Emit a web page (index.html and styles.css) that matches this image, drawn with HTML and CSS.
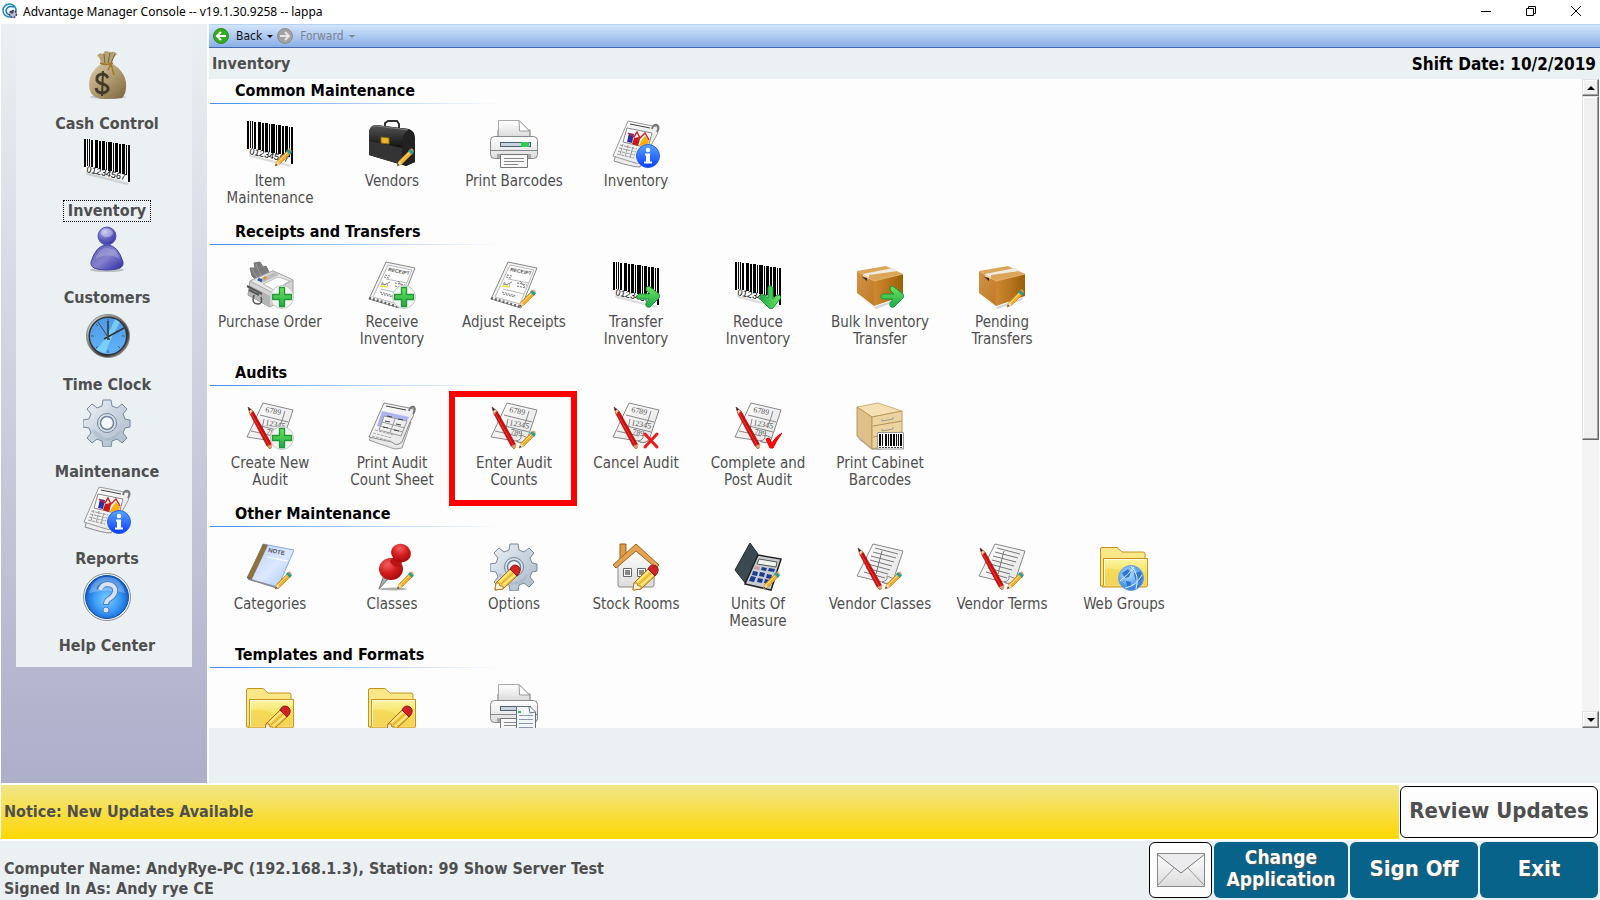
FILE: index.html
```html
<!DOCTYPE html>
<html lang="en">
<head>
  <meta charset="UTF-8" />
  <title>Advantage Manager Console</title>
  <link rel="stylesheet" href="styles.css">
</head>
<body>
  <!-- shared icon shapes, all on a 48x48 grid -->
  <svg class="defs" width="0" height="0" aria-hidden="true">
    <defs>
      <linearGradient id="gBag" x1="0" y1="0" x2="1" y2="1"><stop offset="0" stop-color="#d9ccaa"/><stop offset=".5" stop-color="#b09a70"/><stop offset="1" stop-color="#7a643c"/></linearGradient>
      <radialGradient id="gUser" cx=".35" cy=".25" r=".9"><stop offset="0" stop-color="#b5b4ec"/><stop offset=".5" stop-color="#6260be"/><stop offset="1" stop-color="#2c2aa0"/></radialGradient>
      <linearGradient id="gBody" x1="0" y1="0" x2="1" y2="1"><stop offset="0" stop-color="#5a58b4"/><stop offset=".5" stop-color="#8482cc"/><stop offset="1" stop-color="#2a27a4"/></linearGradient>
      <linearGradient id="gSteel" x1="0" y1="0" x2="1" y2="1"><stop offset="0" stop-color="#fff"/><stop offset=".4" stop-color="#777"/><stop offset=".7" stop-color="#333"/><stop offset="1" stop-color="#bbb"/></linearGradient>
      <linearGradient id="gFace" x1="0" y1="0" x2="0" y2="1"><stop offset="0" stop-color="#4d9ae6"/><stop offset="1" stop-color="#62b2fa"/></linearGradient>
      <linearGradient id="gGear" x1="0" y1="0" x2="1" y2="1"><stop offset="0" stop-color="#f4f6f9"/><stop offset=".45" stop-color="#ccd6e1"/><stop offset="1" stop-color="#a9b8c8"/></linearGradient>
      <linearGradient id="gInfo" x1="0" y1="0" x2="0" y2="1"><stop offset="0" stop-color="#5aa5ff"/><stop offset="1" stop-color="#0a3cff"/></linearGradient>
      <radialGradient id="gHelp" cx=".5" cy=".55" r=".55"><stop offset="0" stop-color="#7fd0ff"/><stop offset=".55" stop-color="#3a9af6"/><stop offset="1" stop-color="#0b56c8"/></radialGradient>
      <linearGradient id="gGreen" x1="0" y1="0" x2="0" y2="1"><stop offset="0" stop-color="#6fe35a"/><stop offset="1" stop-color="#1fa94c"/></linearGradient>
      <linearGradient id="gBoxL" x1="0" y1="0" x2="1" y2="1"><stop offset="0" stop-color="#d29245"/><stop offset="1" stop-color="#c07a28"/></linearGradient>
      <linearGradient id="gBoxR" x1="0" y1="0" x2="1" y2="0"><stop offset="0" stop-color="#cf8832"/><stop offset="1" stop-color="#9a6008"/></linearGradient>
      <linearGradient id="gFolder" x1="0" y1="0" x2="0" y2="1"><stop offset="0" stop-color="#fdf6a8"/><stop offset=".45" stop-color="#f6e468"/><stop offset="1" stop-color="#f8d870"/></linearGradient>
      <linearGradient id="gPaper" x1="0" y1="0" x2="1" y2="1"><stop offset="0" stop-color="#fff"/><stop offset="1" stop-color="#e2e2e2"/></linearGradient>
      <linearGradient id="gNote" x1="0" y1="0" x2="1" y2="1"><stop offset="0" stop-color="#b4cdfb"/><stop offset=".55" stop-color="#dce9ff"/><stop offset="1" stop-color="#9fc0f8"/></linearGradient>
      <radialGradient id="gPin" cx=".35" cy=".3" r=".8"><stop offset="0" stop-color="#f06060"/><stop offset=".5" stop-color="#d41c1c"/><stop offset="1" stop-color="#9c0808"/></radialGradient>
      <linearGradient id="gWhite" x1="0" y1="0" x2="0" y2="1"><stop offset="0" stop-color="#fff"/><stop offset="1" stop-color="#dcdcdc"/></linearGradient>
      <linearGradient id="gCase" x1="0" y1="0" x2="0" y2="1"><stop offset="0" stop-color="#555"/><stop offset="1" stop-color="#111"/></linearGradient>
      <radialGradient id="gGlobe" cx=".4" cy=".35" r=".7"><stop offset="0" stop-color="#c0e2ff"/><stop offset=".6" stop-color="#5aa3ee"/><stop offset="1" stop-color="#2a6fd0"/></radialGradient>

      <symbol id="bag" viewBox="0 0 48 48">
        <ellipse cx="25" cy="46" rx="18" ry="2" fill="#000" opacity=".15"/>
        <path d="M18 13Q6 21 6 33Q6 38 8 42Q12 48 22 48Q32 48 39 47Q44 42 43 31Q41 20 30 13Z" fill="url(#gBag)"/>
        <path d="M18 12Q17 6 14 5Q16 1 20 3L22 0L28 1Q32 0 34 3Q29 7 29 13Q24 15 18 12Z" fill="#b7a276"/>
        <path d="M21 3L22 12M27 2L25 12M32 3L28 12" stroke="#74603a" fill="none"/>
        <path d="M17 12Q23 15 30 12M28 13L31 24M28 13L25 19" stroke="#a5762a" stroke-width="1.5" fill="none"/>
        <path d="M25 27Q23 23 19 23Q13 24 14 29Q15 32 20 33Q26 35 25 39Q23 42 19 42Q14 42 13 37" stroke="#453b2b" stroke-width="3" fill="none"/>
        <path d="M20 20L19 45" stroke="#453b2b" stroke-width="2"/>
      </symbol>
      <symbol id="barcode" viewBox="0 0 48 48">
        <path d="M2 34L46 45L44 47L4 37Z" fill="#000" opacity=".12"/>
        <path d="M1 1L47 8V44L1 32Z" fill="#fff"/>
        <path fill="#000" d="M1 1h2v28h-2zM4 1h1v27h-1zM6 1h1v27h-1zM8 2h2v27h-2zM12 2h3v28h-3zM16 3h2v28h-2zM19 3h3v29h-3zM23 4h1v28h-1zM25 4h4v29h-4zM30 5h1v29h-1zM32 5h3v29h-3zM36 6h2v29h-2zM39 6h3v30h-3zM43 7h1v30h-1zM45 7h2v37h-2z"/>
        <text x="3" y="34" transform="rotate(12 3 34)" class="ico-code">01234567</text>
      </symbol>
      <symbol id="user" viewBox="0 0 48 48">
        <ellipse cx="24" cy="45" rx="17" ry="2" fill="#000" opacity=".2"/>
        <path d="M24 20Q35 20 40 37Q42 45 24 45Q6 45 8 37Q13 20 24 20Z" fill="url(#gBody)" stroke="#4644a4"/>
        <circle cx="24" cy="11" r="9" fill="url(#gUser)" stroke="#5856b0"/>
        <ellipse cx="24" cy="8" rx="6" ry="4" fill="#fff" opacity=".35"/>
        <path d="M12 34Q17 22 24 23Q33 23 37 34Q26 27 12 34Z" fill="#fff" opacity=".2"/>
      </symbol>
      <symbol id="clock" viewBox="0 0 48 48">
        <circle cx="25" cy="24" r="21.5" fill="url(#gSteel)" stroke="#888"/>
        <circle cx="25" cy="24" r="19.5" fill="#333"/>
        <circle cx="25" cy="24" r="18" fill="url(#gFace)"/>
        <path d="M13 38Q24 27 32 7L37 10Q27 28 22 41Z" fill="#8fe8fa" opacity=".6"/>
        <path d="M25 7v3M25 38v3M8 24h3M39 24h3M13 12l2 2M35 34l2 2M13 36l2-2" stroke="#35617d"/>
        <path d="M25 9V28M21 27L41 16" stroke="#333" stroke-width="1.5" fill="none"/>
        <path d="M15 10L27 28" stroke="#444"/>
      </symbol>
      <symbol id="gear" viewBox="0 0 48 48">
        <path d="M20 1h8l1 6 5 2 5-4 5 5-4 5 2 5 5 1v7l-5 1-2 5 4 5-5 5-5-4-5 2-1 6h-8l-1-6-5-2-5 4-5-5 4-5-2-5-6-1v-7l6-1 2-5-4-5 5-5 5 4 5-2z" fill="url(#gGear)" stroke="#74879b"/>
        <path d="M8 30Q16 32 20 38Q27 42 39 30Q34 42 24 42Q12 41 8 30Z" fill="#8ea2b8" opacity=".35"/>
        <circle cx="24" cy="24" r="9.5" fill="#d9e1ea" stroke="#71859a"/>
        <circle cx="24" cy="24" r="6.5" fill="#f4f7fa" stroke="#71859a" stroke-width="1.5"/>
      </symbol>
      <symbol id="report" viewBox="0 0 48 48">
        <path d="M4 34L2 41Q20 47 28 47L34 38Z" fill="#eee" stroke="#888"/>
        <path d="M16 1L46 7Q47 14 42 20L30 42Q26 45 20 42L1 36Z" fill="url(#gPaper)" stroke="#999"/>
        <path d="M40 9Q41 4 45 5Q48 7 45 12" fill="none" stroke="#777" stroke-width="2"/>
        <path d="M18 4L38 8" stroke="#444"/>
        <path d="M15 8L40 13L36 28L11 22Z" fill="#fff" stroke="#888"/>
        <path d="M17 13L22 14L20 23L15 22Z" fill="#2a2ea8"/><path d="M22 18L27 17L28 19L26 26L20 24Z" fill="#c81818"/><path d="M29 21L33 16L37 21L35 28L27 26Z" fill="#ffae10"/>
        <path d="M16 13L22 17L25 12L28 18L33 13L37 20" fill="none" stroke="#d82020" stroke-width="1.5"/>
        <path d="M8 25L25 29M7 28L24 32M6 31L23 35M5 34L22 38M11 24L8 35M16 25L13 37M21 27L18 38" stroke="#999" stroke-dasharray="3 1"/>
      </symbol>
      <symbol id="info" viewBox="0 0 48 48">
        <circle cx="36" cy="36" r="11.5" fill="url(#gInfo)" stroke="#2a63e8"/>
        <circle cx="36" cy="30" r="2.2" fill="#fff"/><path d="M33 33.5h5v8h2v2h-8v-2h2v-6h-1z" fill="#fff"/>
      </symbol>
      <symbol id="help" viewBox="0 0 48 48">
        <circle cx="24" cy="24" r="23.5" fill="#f4f6f8" stroke="#8a8f96"/>
        <circle cx="24" cy="24" r="21.5" fill="url(#gHelp)" stroke="#124f9c"/>
        <path d="M6 20Q10 4 24 4Q38 4 42 20Q24 15 6 20Z" fill="#fff" opacity=".28"/>
        <path d="M16 17Q18 11 25 11Q33 12 32 19Q31 23 26 26Q23 28 23 32" fill="none" stroke="#4c7fbd" stroke-width="6"/>
        <path d="M17 17Q19 11 25 11Q33 12 32 19Q31 23 26 26Q23 28 23 31" fill="none" stroke="#d8e2f2" stroke-width="4"/>
        <circle cx="23" cy="37" r="3" fill="#d8e2f2" stroke="#4c7fbd"/>
      </symbol>
      <symbol id="pencil" viewBox="0 0 48 48">
        <path d="M29 46L31 41L41 31L44 34L34 44Z" fill="#f4b02c" stroke="#c27c14" stroke-width=".7"/>
        <path d="M32 42L42 32" stroke="#ffe08a"/>
        <path d="M29 46L31 41L34 44Z" fill="#f3d9ac"/><path d="M29 46L30 43.5L31.5 45Z" fill="#444"/>
        <path d="M40 31L42 29L46 32L44 35Z" fill="#2c9c92"/><path d="M42 29Q45 27 46 32Z" fill="#e8a060"/>
      </symbol>
      <symbol id="bigpencil" viewBox="0 0 48 48">
        <path d="M21 47L22 40L37 25L44 32L29 46Z" fill="#f8cc40" stroke="#b06a10"/>
        <path d="M25 39L38 27M28 43L42 31" stroke="#fff0a0" stroke-width="1.5"/><path d="M27 41L40 29" stroke="#e0a020"/>
        <path d="M21 47L22 40L25 40L26 43L29 43L29 46Z" fill="#fff4dc" stroke="#b06a10" stroke-width=".8"/>
        <path d="M36 26Q39 20 44 23Q49 27 43 33Z" fill="#d02424" stroke="#981414"/>
      </symbol>
      <symbol id="plus" viewBox="0 0 48 48">
        <circle cx="36" cy="36" r="11.5" fill="#f3f3f3" stroke="#c8c8c8"/>
        <path d="M33.5 26.5h5v7h7v5h-7v7h-5v-7h-7v-5h7z" fill="url(#gGreen)" stroke="#209a34" stroke-width="1.3" stroke-linejoin="round"/>
      </symbol>
      <symbol id="arrow" viewBox="0 0 48 48">
        <path d="M25 34.5Q24 38 27 38H37L34 42Q33 47 38 46L47 37Q49 35 47 33L38 26Q34 24 34 29L38 33H27Z" fill="url(#gGreen)" stroke="#179a3e"/>
      </symbol>
      <symbol id="case" viewBox="0 0 48 48">
        <path d="M17 8V3L20 1H29L31 4V11" fill="none" stroke="#333" stroke-width="2"/>
        <path d="M16 8L31 10" stroke="#b98a1c" stroke-width="3"/>
        <path d="M1 12Q2 5 8 5L41 9Q47 11 47 19V42L38 46L1 35Z" fill="#181818"/>
        <path d="M1 12Q2 5 8 5L41 9Q34 13 34 28L1 21Z" fill="url(#gCase)"/>
        <path d="M1 21L34 28V45L1 35Z" fill="#343434"/><path d="M34 28Q34 12 41 10Q47 12 47 21V42L38 46L34 44Z" fill="#222"/>
        <path d="M13 17L21 18V24L13 23Z" fill="#e8b62c" stroke="#906c10"/>
        <path d="M2 8Q4 5 9 6L40 10" stroke="#999" fill="none" opacity=".6"/>
      </symbol>
      <symbol id="printer" viewBox="0 0 48 48">
        <path d="M8 17V10H40V17" fill="#dbe4ec" stroke="#62788c"/>
        <path d="M8.5 16.5V.5H29L39.5 11V16.5Z" fill="url(#gWhite)" stroke="#aaa"/>
        <path d="M29 .5L29.500 11H39.5Z" fill="#fff" stroke="#999"/>
        <rect x=".5" y="16.5" width="47" height="22" rx="4" fill="url(#gWhite)" stroke="#888"/>
        <path d="M1 30.5H47" stroke="#888"/>
        <rect x="10.5" y="22.5" width="30" height="4" fill="#c8d2da" stroke="#4f6070"/>
        <path d="M7 34H41V38H7Z" fill="#aaa"/>
        <path d="M10.5 34.5H37.5V47.5H10.5Z" fill="#f8f8f8" stroke="#777"/>
        <path d="M14 38.5H34M14 41.5H34M14 44.5H28" stroke="#888"/>
      </symbol>
      <symbol id="light" viewBox="0 0 48 48"><rect x="31" y="22" width="8" height="5" rx="1" fill="#2ecc50"/></symbol>
      <symbol id="sheet" viewBox="0 0 48 48">
        <path d="M26.5 22.5H40L45.5 28V48H26.5Z" fill="#f2f7fb" stroke="#5f7386"/><path d="M39 23L40 29L45 28" fill="#fff" stroke="#5f7386"/>
        <path d="M29 31.5H43M29 35.5H43M29 39.5H43M29 43.5H43" stroke="#8c98b8"/><path d="M28 28h3" stroke="#38c04c" stroke-width="2"/>
      </symbol>
      <symbol id="fax" viewBox="0 0 48 48">
        <path d="M6 15L4 7L9 7L8 2L14 1L17 6L20 5L24 13L10 19Z" fill="#7c7c7c" stroke="#777"/>
        <path d="M10 3L16 17M6 8L12 18" stroke="#999"/>
        <path d="M4 20L27 10L47 19V33L24 46L2 34Z" fill="#d4d4d4" stroke="#999"/>
        <path d="M4 20L27 10L47 19L25 31Z" fill="#e8e8e8" stroke="#aaa"/>
        <path d="M17 23L32 16L44 20L28 29Z" fill="#fff" stroke="#bbb"/>
        <path d="M11 19L28 11L33 14L16 22Z" fill="#bdbdbd"/><path d="M12 18l4 2" stroke="#2d5ca0" stroke-width="3"/><path d="M18 16l2 2" stroke="#e09020" stroke-width="3"/>
        <path d="M3 24L24 35V46L3 34Z" fill="#b4b4b4"/><path d="M1 25L16 33M3 29L13 34" stroke="#555" stroke-width="2"/>
        <path d="M8 34Q5 43 12 43Q17 43 15 36" fill="none" stroke="#555" stroke-width="1.5"/>
      </symbol>
      <symbol id="receipt" viewBox="0 0 48 48">
        <path d="M18 1L47 7L31 47L1 38Z" fill="#f4f4f4" stroke="#888"/>
        <path d="M20 4L44 9L30 43L5 36Z" fill="#fdfdfd" stroke="#aaa" stroke-width=".8"/>
        <text x="20" y="10" transform="rotate(11 20 10)" class="ico-receipt">RECEIPT</text>
        <path d="M17 14L22 15M16 16L21 17M13 23L20 24M27 22L37 24M27 25L36 27M12 31L26 35M13 33L25 36" stroke="#777" stroke-dasharray="2 1"/>
        <path d="M18 18L39 22M13 28L34 33" stroke="#bbb"/><path d="M12 25L20 26" stroke="#e6e23c" stroke-width="1.5"/>
        <path d="M14 21L16 24L22 21M30 20L35 26" stroke="#888" fill="none"/>
        <path d="M1 37L31 46" stroke="#666" stroke-width="2.5" stroke-dasharray="2 2"/>
      </symbol>
      <symbol id="box" viewBox="0 0 48 48">
        <path d="M1 34L18 46L46 36L44 39L20 48Z" fill="#000" opacity=".15"/>
        <path d="M1 10L30 5L47 13L18 21Z" fill="#dba55a"/>
        <path d="M1 10L18 20V45L1 32Z" fill="url(#gBoxL)"/><path d="M18 20L47 13V35L18 45Z" fill="url(#gBoxR)"/>
        <path d="M7 13L37 7L42 10L13 14V18L7 15Z" fill="#f1ece2"/><path d="M6 16l5 4v-3z" fill="#3b2a18"/>
        <path d="M1 10L18 20L47 13" fill="none" stroke="#eab974" stroke-width=".8"/>
      </symbol>
      <symbol id="audit" viewBox="0 0 48 48">
        <path d="M17 1L47 8L37 38Q31 43 26 39L1 35Z" fill="url(#gPaper)" stroke="#888"/>
        <path d="M26 39Q32 38 31 33L38 36Q34 43 26 39Z" fill="#eee" stroke="#888"/>
        <path d="M14 13L42 20M11 23L39 30M5 29L27 34M39 9L35 22M18 17L15 32" stroke="#888" fill="none"/>
        <text x="19" y="10" transform="rotate(11 19 10)" class="ico-num">6789</text>
        <text x="19" y="23" transform="rotate(11 19 23)" class="ico-num">12345</text>
        <text x="20" y="32" transform="rotate(11 20 32)" class="ico-num">789</text>
      </symbol>
      <symbol id="lines" viewBox="0 0 48 48">
        <path d="M17 1L47 8L37 38Q31 43 26 39L1 33Z" fill="url(#gPaper)" stroke="#888"/>
        <path d="M26 39Q32 38 31 33L38 36Q34 43 26 39Z" fill="#eee" stroke="#888"/>
        <path d="M19 5L42 11M17 9L40 15M15 13L38 19M14 17L36 23M12 21L34 27M10 25L32 31M8 29L29 35M26 8L20 31" stroke="#777" fill="none"/>
      </symbol>
      <symbol id="redpencil" viewBox="0 0 48 48">
        <path d="M2 5L7 9L26 43L24 47L21 44L4 12Z" fill="#cc0c0c" stroke="#a00c0c" stroke-width=".6"/>
        <path d="M5 11L23 43" stroke="#ee3c30"/>
        <path d="M2 5L7 9L4 12Z" fill="#edcb9a"/><path d="M2 5L5 7.5L3 9Z" fill="#222"/><path d="M21 44L26 42L26 46L24 47Z" fill="#d9a070"/>
      </symbol>
      <symbol id="calendar" viewBox="0 0 48 48">
        <path d="M4 34L1 38Q20 45 27 47L34 46L43 20Z" fill="#e8e8e8" stroke="#999"/>
        <path d="M16 1L46 7Q47 14 42 20L34 40Q28 45 24 40L1 35Z" fill="url(#gPaper)" stroke="#888"/>
        <path d="M41 9Q42 4 46 5Q48 8 45 12" fill="none" stroke="#777" stroke-width="2"/>
        <path d="M18 4L38 8" stroke="#444"/><path d="M14 9L41 15L39 19L16 14L13 25L9 24Z" fill="#aeb4ee"/>
        <path d="M16 14L39 19L33 34L11 28ZM27 17L22 31M14 20L37 26M12 24L35 30" fill="none" stroke="#999"/>
        <path d="M19 14l5 1M30 17l5 1M17 19l5 1M28 22l5 1M15 25l5 1M26 28l5 1" stroke="#444"/>
        <path d="M7 28L25 33M5 31L24 36M4 34L22 39" stroke="#aaa" stroke-dasharray="3 1"/>
      </symbol>
      <symbol id="cross" viewBox="0 0 48 48"><path d="M33 32L45 45M45 32L33 45" stroke="#f01818" stroke-width="3" stroke-linecap="round"/></symbol>
      <symbol id="check" viewBox="0 0 48 48"><path d="M32 37L35 36L38 41Q42 34 48 31Q42 39 39 46H36Z" fill="#f80c0c" stroke="#e00" stroke-linejoin="round"/></symbol>
      <symbol id="cabinet" viewBox="0 0 48 48">
        <path d="M1 36L16 48H26L18 42Z" fill="#000" opacity=".25"/>
        <path d="M1 5L22 1L46 9L16 15Z" fill="#f4e0b4" stroke="#cdb27a"/>
        <path d="M1 5L16 15V47L1 34Z" fill="#dfc08a" stroke="#b9985c"/><path d="M16 15L46 9V40L16 47Z" fill="#ecd3a0" stroke="#b9985c"/>
        <path d="M17 24L46 19M17 35L46 30" stroke="#b49258"/>
        <path d="M26 17v2l11-2v-2M26 27v2l11-2v-2" fill="none" stroke="#999"/>
        <path d="M21.5 30.5H47.5V47H21.5Z" fill="#fff" stroke="#999"/>
        <path d="M23 32h2v12h-2zM26 32h1v12h-1zM29 32h2v12h-2zM32 32h1v12h-1zM34 32h2v12h-2zM37 32h2v12h-2zM40 32h1v12h-1zM42 32h1v12h-1zM44 32h2v12h-2z" fill="#000"/>
        <path d="M23 45.5H46" stroke="#444" stroke-dasharray="2 1"/>
      </symbol>
      <symbol id="note" viewBox="0 0 48 48">
        <path d="M17 1L48 7L32 44L2 36Z" fill="url(#gNote)" stroke="#88a8dc"/>
        <path d="M17 1L22 2L6 36L1 34Z" fill="#8e7140"/><path d="M1 34L6 36L6 37L1 35Z" fill="#333"/>
        <path d="M2 36L32 45L34 42" fill="none" stroke="#888" stroke-width="1.5"/><path d="M21 14L42 18" stroke="#fff"/>
        <text x="22" y="9" transform="rotate(11 22 9)" class="ico-note">NOTE</text>
      </symbol>
      <symbol id="pin" viewBox="0 0 48 48">
        <ellipse cx="25" cy="46" rx="14" ry="1.5" fill="#000" opacity=".3"/>
        <path d="M16 32L11 46L20 36Z" fill="#aaa" stroke="#777"/>
        <ellipse cx="23" cy="26" rx="12" ry="11" fill="url(#gPin)"/>
        <path d="M22 18L27 12L34 19L32 24Q25 25 22 18Z" fill="#b81414"/>
        <ellipse cx="33" cy="10" rx="10" ry="9" fill="url(#gPin)" transform="rotate(25 33 10)"/>
      </symbol>
      <symbol id="house" viewBox="0 0 48 48">
        <path d="M8 17V1H14V12" fill="#dd9c48" stroke="#9a5e18"/>
        <path d="M6 22L24 5L42 22V42Q42 44 40 44H8Q6 44 6 42Z" fill="url(#gWhite)" stroke="#888"/>
        <path d="M24 1L47 22L44 25L24 8L4 25L1 22Z" fill="#e2a453" stroke="#a2641c"/>
        <path d="M11.5 25.5h8v8h-8zM25.5 25.5h8v8h-8z" fill="#fff" stroke="#666"/><path d="M13 27h5v5h-5zM27 27h5v5h-5z" fill="#888"/>
      </symbol>
      <symbol id="calc" viewBox="0 0 48 48">
        <path d="M1 27L16 0L24 11L12 41Z" fill="#3a4a50" stroke="#20292d"/>
        <path d="M24 12L47 16L37 47L11 41Z" fill="#c8ccd0" stroke="#222" stroke-width="1.5"/>
        <path d="M25 16L43 19L42 24L23 21Z" fill="#eef2ee" stroke="#555"/>
        <path d="M21 23l5 1-1 3-5-1z" fill="#cc9c9c"/>
        <path d="M28 24l5 1-1 3-5-1zM35 25l6 1-1 3-6-1zM19 28l5 1-1 4-5-1zM26 29l5 1-1 4-5-1zM33 31l5 1-1 4-5-1zM17 33l5 1-2 5-5-1zM24 35l5 1-1 4-5-1zM31 36l5 1-1 4-5-1z" fill="#1c3c90"/>
      </symbol>
      <symbol id="folder" viewBox="0 0 48 48">
        <path d="M.5 43V6Q.5 4.5 2 4.5H17L22 9H43Q45 9 45 11V43Z" fill="#fae888" stroke="#c8921e"/>
        <path d="M3.5 15.5H47.5V42Q47.5 44 46 44H2Q3.5 43 3.5 41Z" fill="url(#gFolder)" stroke="#c8921e"/>
        <path d="M5 26Q18 24 29 32Q39 35 46 30V42H5Z" fill="#f2cf40" opacity=".45"/>
        <path d="M4.5 42V16.5H46" fill="none" stroke="#fffce0"/>
      </symbol>
      <symbol id="globe" viewBox="0 0 48 48">
        <circle cx="31" cy="35" r="12.5" fill="url(#gGlobe)" stroke="#6aa4e4"/>
        <path d="M22 30L28 26L31 29L29 34L25 35ZM34 30L41 29L42 36L37 40L35 35ZM26 38L31 39L30 45L27 43Z" fill="#2d74cc"/>
        <path d="M20 38Q28 32 34 24M25 45Q36 43 42 32M31 23Q40 32 36 46" stroke="#e4f4ff" fill="none"/>
      </symbol>
    </defs>
  </svg>

  <div class="titlebar">
    <svg class="app-logo" viewBox="0 0 16 16"><circle cx="7.5" cy="7.5" r="6.5" fill="none" stroke="#1a8cc0" stroke-width="1.5"/><path d="M12 4Q6 2 4 7Q4 11 8 12" fill="none" stroke="#1a7ab8" stroke-width="1.5"/><circle cx="11" cy="11" r="3.5" fill="#b8bcd0" stroke="#3c3f66" stroke-width="1.5" stroke-dasharray="2 1"/><circle cx="10" cy="9" r="1.5" fill="#3c3f66"/></svg>
    <span class="app-title">Advantage Manager Console -- v19.1.30.9258 -- lappa</span>
    <div class="window-buttons">
      <button aria-label="Minimize"><svg viewBox="0 0 10 10"><path d="M0 5.5H10" stroke="#000"/></svg></button>
      <button aria-label="Restore"><svg viewBox="0 0 10 10"><path d="M.5 2.5h7v7h-7zM2.500 2.500v-2h7v7h-2" fill="none" stroke="#000"/></svg></button>
      <button aria-label="Close"><svg viewBox="0 0 10 10"><path d="M0 0L10 10M10 0L0 10" stroke="#000"/></svg></button>
    </div>
  </div>

  <div class="workspace">
    <nav class="sidebar">
      <div class="side-panel">
        <button class="side-item"><svg><use href="#bag"/></svg><span>Cash Control</span></button>
        <button class="side-item active"><svg><use href="#barcode"/></svg><span>Inventory</span></button>
        <button class="side-item"><svg><use href="#user"/></svg><span>Customers</span></button>
        <button class="side-item"><svg><use href="#clock"/></svg><span>Time Clock</span></button>
        <button class="side-item"><svg><use href="#gear"/></svg><span>Maintenance</span></button>
        <button class="side-item"><svg><use href="#report"/><use href="#info"/></svg><span>Reports</span></button>
        <button class="side-item"><svg><use href="#help"/></svg><span>Help Center</span></button>
      </div>
    </nav>

    <main class="main">
      <div class="toolbar">
        <button class="nav-button">
          <svg viewBox="0 0 16 16"><circle cx="8" cy="8" r="7.5" fill="#36ac22" stroke="#2a8a1c"/><path d="M13 8H4M8 4L4 8L8 12" fill="none" stroke="#fff" stroke-width="2"/></svg>
          Back<i class="caret"></i>
        </button>
        <button class="nav-button" disabled>
          <svg viewBox="0 0 16 16"><circle cx="8" cy="8" r="7.5" fill="#a2a2a2" stroke="#8c8c8c"/><path d="M3 8H12M8 4L12 8L8 12" fill="none" stroke="#e6e6e6" stroke-width="2"/></svg>
          Forward<i class="caret"></i>
        </button>
      </div>
      <header class="page-head">
        <h1>Inventory</h1>
        <span class="shift">Shift Date: 10/2/2019</span>
      </header>

      <div class="content">
        <div class="sections">
          <section>
            <h2>Common Maintenance</h2>
            <div class="tiles">
              <button class="tile"><svg><use href="#barcode"/><use href="#pencil"/></svg>Item Maintenance</button>
              <button class="tile"><svg><use href="#case"/><use href="#pencil"/></svg>Vendors</button>
              <button class="tile"><svg><use href="#printer"/><use href="#light"/></svg>Print Barcodes</button>
              <button class="tile"><svg><use href="#report"/><use href="#info"/></svg>Inventory</button>
            </div>
          </section>
          <section>
            <h2>Receipts and Transfers</h2>
            <div class="tiles">
              <button class="tile"><svg><use href="#fax"/><use href="#plus"/></svg>Purchase Order</button>
              <button class="tile"><svg><use href="#receipt"/><use href="#plus"/></svg>Receive Inventory</button>
              <button class="tile"><svg><use href="#receipt"/><use href="#pencil"/></svg>Adjust Receipts</button>
              <button class="tile"><svg><use href="#barcode"/><use href="#arrow"/></svg>Transfer Inventory</button>
              <button class="tile"><svg><use href="#barcode"/><use href="#arrow" transform="rotate(90 36 36)"/></svg>Reduce Inventory</button>
              <button class="tile"><svg><use href="#box"/><use href="#arrow"/></svg>Bulk Inventory Transfer</button>
              <button class="tile"><svg><use href="#box"/><use href="#pencil"/></svg>Pending Transfers</button>
            </div>
          </section>
          <section>
            <h2>Audits</h2>
            <div class="tiles">
              <button class="tile"><svg><use href="#audit"/><use href="#redpencil"/><use href="#plus"/></svg>Create New Audit</button>
              <button class="tile"><svg><use href="#calendar"/></svg>Print Audit Count Sheet</button>
              <button class="tile marked"><svg><use href="#audit"/><use href="#redpencil"/><use href="#pencil"/></svg>Enter Audit Counts</button>
              <button class="tile"><svg><use href="#audit"/><use href="#redpencil"/><use href="#cross"/></svg>Cancel Audit</button>
              <button class="tile"><svg><use href="#audit"/><use href="#redpencil"/><use href="#check"/></svg>Complete and Post Audit</button>
              <button class="tile"><svg><use href="#cabinet"/></svg>Print Cabinet Barcodes</button>
            </div>
          </section>
          <section>
            <h2>Other Maintenance</h2>
            <div class="tiles">
              <button class="tile"><svg><use href="#note"/><use href="#pencil"/></svg>Categories</button>
              <button class="tile"><svg><use href="#pin"/><use href="#pencil"/></svg>Classes</button>
              <button class="tile"><svg><use href="#gear"/><use href="#bigpencil" x="-16"/></svg>Options</button>
              <button class="tile"><svg><use href="#house"/><use href="#bigpencil"/></svg>Stock Rooms</button>
              <button class="tile"><svg><use href="#calc"/><use href="#pencil"/></svg>Units Of Measure</button>
              <button class="tile"><svg><use href="#lines"/><use href="#redpencil"/><use href="#pencil"/></svg>Vendor Classes</button>
              <button class="tile"><svg><use href="#lines"/><use href="#redpencil"/><use href="#pencil"/></svg>Vendor Terms</button>
              <button class="tile"><svg><use href="#folder"/><use href="#globe"/></svg>Web Groups</button>
            </div>
          </section>
          <section>
            <h2>Templates and Formats</h2>
            <div class="tiles">
              <button class="tile"><svg><use href="#folder"/><use href="#bigpencil" x="-2"/></svg></button>
              <button class="tile"><svg><use href="#folder"/><use href="#bigpencil" x="-2"/></svg></button>
              <button class="tile"><svg><use href="#printer"/><use href="#sheet"/></svg></button>
            </div>
          </section>
        </div>
        <div class="scrollbar">
          <button class="scroll-button" aria-label="Scroll up"><i class="up"></i></button>
          <div class="scroll-track"><div class="scroll-thumb"></div></div>
          <button class="scroll-button" aria-label="Scroll down"><i class="down"></i></button>
        </div>
      </div>
      <div class="main-foot"></div>
    </main>
  </div>

  <div class="notice">
    <div class="notice-text">Notice: New Updates Available</div>
    <button class="plain-button review">Review Updates</button>
  </div>

  <footer class="status">
    <div class="status-text">
      <div>Computer Name: AndyRye-PC (192.168.1.3), Station: 99 Show Server Test</div>
      <div>Signed In As: Andy rye CE</div>
    </div>
    <button class="plain-button mail" aria-label="Messages">
      <svg viewBox="0 0 48 34"><rect x=".5" y=".5" width="47" height="33" fill="url(#gWhite)" stroke="#888"/><path d="M0 33L18 14M48 33L30 14" stroke="#999"/><path d="M1 1L24 20L47 1Z" fill="#ececef"/><path d="M0 1L24 20L48 1" fill="none" stroke="#777"/></svg>
    </button>
    <button class="blue-button change">Change Application</button>
    <button class="blue-button signoff">Sign Off</button>
    <button class="blue-button exit">Exit</button>
  </footer>
</body>
</html>
```
FILE: styles.css
```css
* {
  box-sizing: border-box;
}
body {
  margin: 0;
  height: 100vh;
  display: flex;
  flex-direction: column;
  overflow: hidden;
  background-color: #fdfdfd;
  color: #4f4f4f;
  font-family: Tahoma, 'DejaVu Sans Condensed', 'DejaVu Sans', sans-serif;
  font-size: 16px;
}
button {
  font: inherit;
  color: inherit;
  background: none;
  border: none;
  padding: 0;
  margin: 0;
  cursor: pointer;
}
h1, h2 {
  margin: 0;
  font-size: 16px;
  font-weight: bold;
}
.defs {
  position: absolute;
}

/* title bar */
.titlebar {
  display: flex;
  align-items: center;
  flex: none;
  height: 24px;
  padding: 0 2px 2px;
  background-color: #fff;
  color: #000;
  font-family: 'Segoe UI', 'Noto Sans', sans-serif;
  font-size: 12px;
}
.app-logo {
  width: 16px;
  height: 16px;
  margin-right: 5px;
}
.window-buttons {
  display: flex;
  margin-left: auto;
}
.window-buttons button {
  width: 45px;
  height: 20px;
}
.window-buttons svg {
  display: block;
  width: 10px;
  height: 10px;
  margin: 0 auto;
}

/* left menu */
.workspace {
  display: flex;
  flex: 1;
  min-height: 0;
}
.sidebar {
  flex: none;
  width: 206px;
  margin: 0 2px 0 1px;
  padding: 0 15px;
  background: linear-gradient(#ebf0f3, #adaec8);
}
.side-panel {
  display: flex;
  flex-direction: column;
  padding: 27px 0 7px 6px;
  background-color: #ebf0f3;
}
.side-item {
  display: flex;
  flex-direction: column;
  align-items: center;
  height: 87px;
  font-weight: bold;
}
.side-item svg, .tile svg {
  display: block;
  flex: none;
  width: 48px;
  height: 48px;
}
.side-item span {
  margin-top: 14px;
  padding: 0 4px;
  line-height: 20px;
  border: 1px solid transparent;
}
.side-item.active span {
  border: 1px dotted #000;
}

/* main area */
.main {
  display: flex;
  flex-direction: column;
  flex: 1;
  min-width: 0;
}
.toolbar {
  display: flex;
  align-items: center;
  flex: none;
  height: 24px;
  padding-left: 4px;
  border-top: 1px solid #b5d4f5;
  border-bottom: 1px solid #4468b0;
  background: linear-gradient(#d2e4fb, #8aafe6);
  font-size: 12px;
}
.nav-button {
  display: flex;
  align-items: center;
  color: #111;
}
.nav-button svg {
  width: 16px;
  height: 16px;
  margin-right: 7px;
}
.nav-button:disabled {
  color: #7c8490;
}
.caret {
  margin: 0 4px 0 5px;
  border: 3px solid transparent;
  border-top-color: currentColor;
  border-bottom: none;
}
.page-head {
  display: flex;
  justify-content: space-between;
  align-items: center;
  flex: none;
  height: 31px;
  padding: 0 4px 0 3px;
  background-color: #ebf0f3;
}
.shift {
  color: #000;
  font-size: 17px;
  font-weight: bold;
}
.content {
  display: flex;
  flex: 1;
  min-height: 0;
}
.sections {
  flex: 1;
  overflow: hidden;
}
.main-foot {
  flex: none;
  height: 55px;
  background-color: #ebf0f3;
}
section {
  height: 141px;
}
h2 {
  height: 25px;
  padding-left: 26px;
  line-height: 24px;
  color: #000;
  background: linear-gradient(to right, #3c90f0, #b8d4f8 170px, transparent 290px) 1px 24px / 290px 1px no-repeat;
}
.tiles {
  display: flex;
  padding-top: 8px;
}
.tile {
  display: flex;
  flex-direction: column;
  align-items: center;
  width: 122px;
  height: 105px;
  padding: 8px 8px 0;
  font-size: 15px;
  line-height: 17px;
}
.tile svg {
  margin-bottom: 5px;
}
/* red frame lies over the tile and a little outside it */
.marked {
  position: relative;
}
.marked::after {
  content: '';
  position: absolute;
  inset: -3px -2px -7px -4px;
  border: 6px solid #f00;
}

/* lettering inside the icons */
.ico-code {
  font: 9px 'Liberation Sans', sans-serif;
}
.ico-receipt {
  font: bold 5px 'Liberation Sans', sans-serif;
  fill: #555;
}
.ico-num {
  font: 8px 'Liberation Serif', serif;
  fill: #555;
}
.ico-note {
  font: bold 6px 'Liberation Sans', sans-serif;
  fill: #555;
}

/* scroll bar */
.scrollbar {
  display: flex;
  flex-direction: column;
  flex: none;
  width: 17px;
  margin-right: 1px;
  background-color: #e3e3e3;
}
.scroll-button, .scroll-thumb {
  background-color: #f0f0f0;
  border: 1px solid;
  border-color: #e3e3e3 #696969 #696969 #e3e3e3;
  box-shadow: inset -1px -1px #a0a0a0, inset 1px 1px #fff;
}
.scroll-button {
  display: flex;
  align-items: center;
  justify-content: center;
  flex: none;
  height: 17px;
}
.scroll-track {
  flex: 1;
  background-color: #f4f4f4;
}
.scroll-thumb {
  height: 56%;
}
.up, .down {
  border: 4px solid transparent;
}
.up {
  border-top: none;
  border-bottom-color: #000;
}
.down {
  border-bottom: none;
  border-top-color: #000;
}

/* bottom bars */
.notice {
  display: flex;
  flex: none;
  height: 58px;
  padding: 2px 0;
  font-weight: bold;
}
.notice-text {
  flex: 1;
  margin-left: 1px;
  padding-left: 3px;
  line-height: 54px;
  background: linear-gradient(#f0e68c, #ffd700);
}
.plain-button {
  flex: none;
  background-color: #fdfdfd;
  border: 1px solid #000;
  border-radius: 6px;
}
.review {
  width: 198px;
  margin: 1px 2px 1px 1px;
  padding-bottom: 4px;
  font-size: 22px;
  font-weight: bold;
}
.status {
  display: flex;
  gap: 2px;
  flex: none;
  height: 59px;
  padding: 1px 2px 2px 4px;
  background-color: #ebf0f3;
  font-weight: bold;
}
.status-text {
  flex: 1;
  padding-top: 17px;
  line-height: 20px;
}
.mail {
  width: 63px;
}
.mail svg {
  display: block;
  width: 48px;
  margin: 0 auto;
}
.blue-button {
  flex: none;
  padding-bottom: 4px;
  border-radius: 6px;
  background-color: #08638a;
  color: #fff;
  font-size: 22px;
  font-weight: bold;
  text-shadow: 1px 1px 1px #555;
}
.change {
  width: 134px;
  font-size: 19px;
  line-height: 22px;
}
.signoff {
  width: 128px;
}
.exit {
  width: 118px;
}
```
